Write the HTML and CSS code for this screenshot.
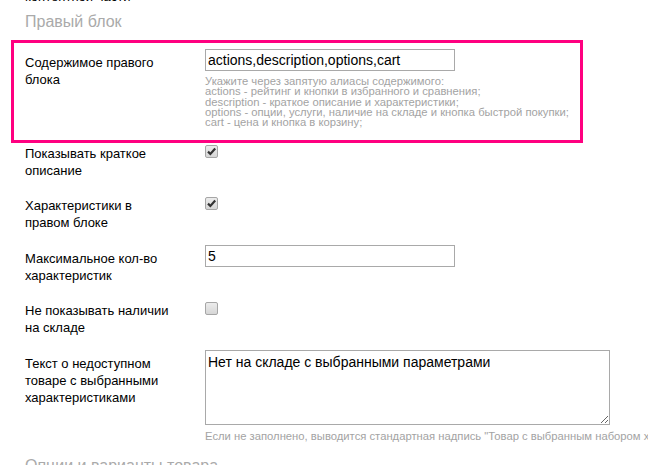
FILE: index.html
```html
<!DOCTYPE html>
<html lang="ru">
<head>
    <meta charset="UTF-8">
    <meta name="viewport" content="width=device-width, initial-scale=1.0">
    <title>Настройки карточки товара</title>
    <link rel="stylesheet" href="styles.css">
</head>
<body>
<div class="settings">
    <div class="row row-prev">
        <div class="label">контентной части</div>
    </div>

    <div class="section-title">Правый блок</div>

    <div class="row row-active">
        <div class="label">Содержимое правого блока</div>
        <div class="field">
            <input type="text" class="text-input" value="actions,description,options,cart">
            <div class="hint">
                Укажите через запятую алиасы содержимого:<br>
                actions - рейтинг и кнопки в избранного и сравнения;<br>
                description - краткое описание и характеристики;<br>
                options - опции, услуги, наличие на складе и кнопка быстрой покупки;<br>
                cart - цена и кнопка в корзину;
            </div>
        </div>
    </div>

    <div class="row">
        <div class="label">Показывать краткое описание</div>
        <div class="field">
            <span class="check checked">
                <svg width="11" height="11" viewBox="0 0 11 11"><path d="M2 5.6 L4.4 8 L9.2 2.6" fill="none" stroke="#333" stroke-width="2.2"/></svg>
            </span>
        </div>
    </div>

    <div class="row">
        <div class="label">Характеристики в правом блоке</div>
        <div class="field">
            <span class="check checked">
                <svg width="11" height="11" viewBox="0 0 11 11"><path d="M2 5.6 L4.4 8 L9.2 2.6" fill="none" stroke="#333" stroke-width="2.2"/></svg>
            </span>
        </div>
    </div>

    <div class="row">
        <div class="label">Максимальное кол-во характеристик</div>
        <div class="field">
            <input type="text" class="text-input" value="5">
        </div>
    </div>

    <div class="row">
        <div class="label">Не показывать наличии на складе</div>
        <div class="field">
            <span class="check"></span>
        </div>
    </div>

    <div class="row">
        <div class="label">Текст о недоступном товаре с выбранными характеристиками</div>
        <div class="field">
            <textarea class="text-area">Нет на складе с выбранными параметрами</textarea>
            <div class="hint nowrap">Если не заполнено, выводится стандартная надпись "Товар с выбранным набором характеристик отсутствует на складе"</div>
        </div>
    </div>

    <div class="section-title">Опции и варианты товара</div>
</div>
</body>
</html>
```

FILE: styles.css
```css
html, body {
    overflow: hidden;
}
body {
    margin: 0;
    background: #fff;
    color: #000;
    font-family: "Liberation Sans", Arial, sans-serif;
    font-size: 13px;
}
.settings {
    width: 648px;
}
.section-title {
    margin: 2px 0 11.3px 25px;
    font-size: 16px;
    line-height: 20px;
    color: #aaa;
}
.row {
    display: flex;
    align-items: flex-start;
    width: 566px;
    margin-left: 14px;
    padding-bottom: 13.4px;
}
.row-prev {
    margin-top: -16.8px;
    padding-bottom: 4.5px;
}
.row-active {
    padding-top: 6px;
    padding-bottom: 12.5px;
    outline: 3px solid #ff0080;
}
.label {
    flex: none;
    width: 191px;
    padding: 5px 27px 0 11px;
    box-sizing: border-box;
    line-height: 17px;
}
.field {
    flex: none;
}
.text-input {
    display: block;
    width: 250px;
    height: 22px;
    margin: 0;
    padding: 0 2px;
    box-sizing: border-box;
    border: 1px solid #a9a9a9;
    font-family: "Liberation Sans", Arial, sans-serif;
    font-size: 14px;
    color: #000;
}
.text-area {
    display: block;
    width: 405px;
    height: 75px;
    margin: 0;
    padding: 3px 2px;
    box-sizing: border-box;
    border: 1px solid #a9a9a9;
    font-family: "Liberation Sans", Arial, sans-serif;
    font-size: 14px;
    color: #000;
}
.hint {
    margin-top: 5px;
    font-size: 11.25px;
    line-height: 10.3px;
    color: #a3a3a3;
}
.nowrap {
    margin-top: 6px;
    white-space: nowrap;
}
.check {
    display: flex;
    align-items: center;
    justify-content: center;
    width: 13px;
    height: 13px;
    margin-top: 5px;
    box-sizing: border-box;
    border: 1px solid #a6a6a6;
    border-radius: 2px;
    background: linear-gradient(#ececec, #d6d6d6);
}
```
